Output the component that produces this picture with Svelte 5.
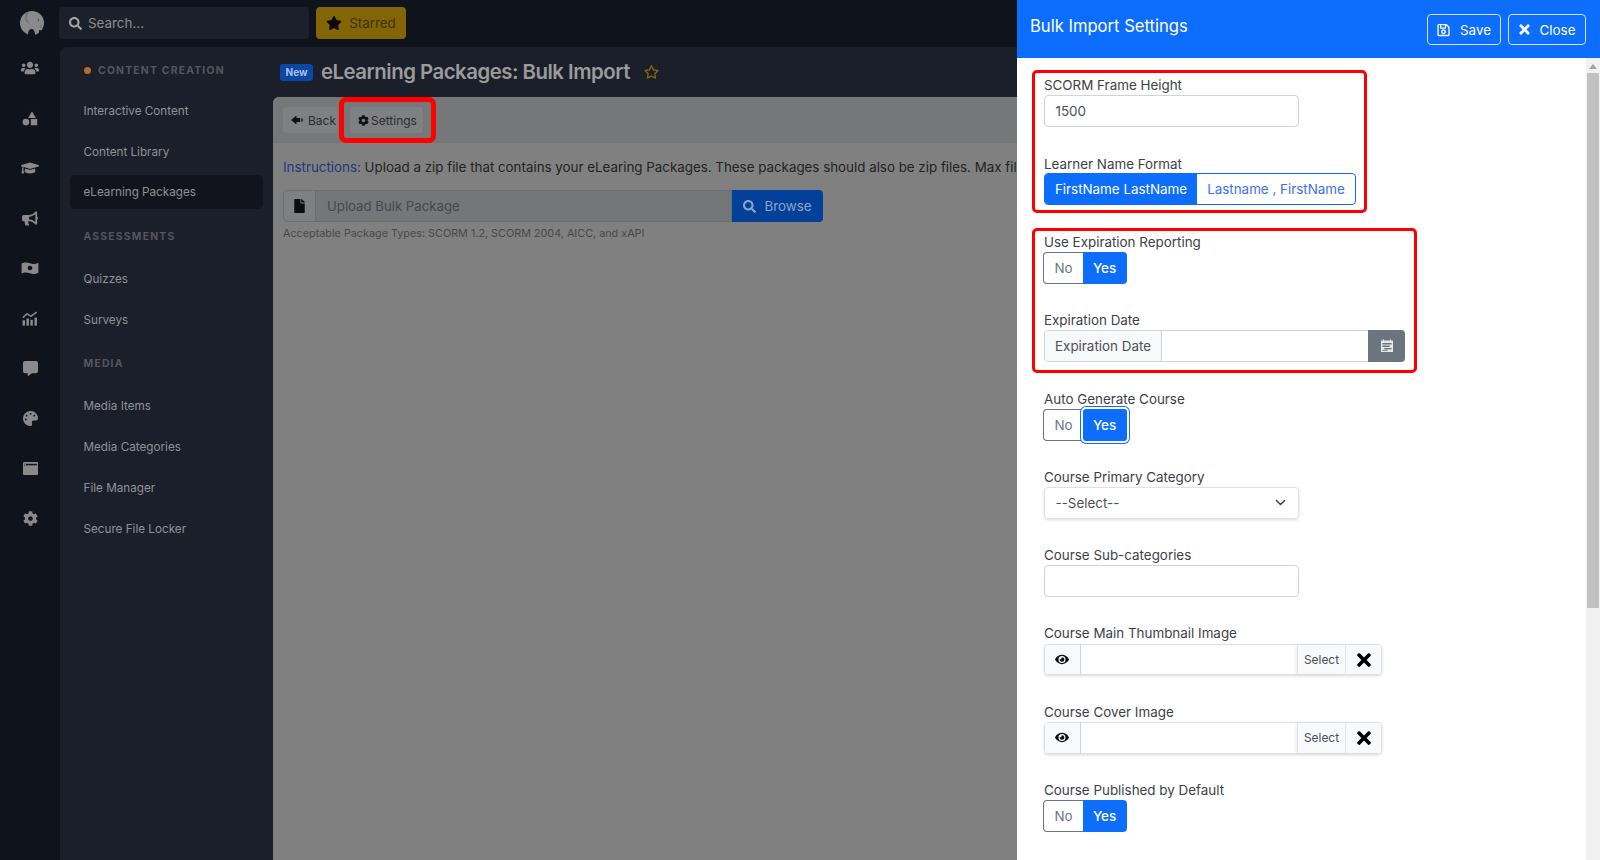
<script>
  const railIcons = ['users','shapes','cap','bullhorn','money','chart','comment','palette','window','cog'];
  const groups = [
    { title: 'CONTENT CREATION', dot: true, items: ['Interactive Content','Content Library','eLearning Packages'] },
    { title: 'ASSESSMENTS', items: ['Quizzes','Surveys'] },
    { title: 'MEDIA', items: ['Media Items','Media Categories','File Manager','Secure File Locker'] }
  ];
  const P = {
    star: 'M259.3 17.8L194 150.2 47.9 171.5c-26.2 3.8-36.7 36.1-17.7 54.6l105.7 103-25 145.5c-4.5 26.3 23.2 46 46.4 33.7L288 439.6l130.7 68.7c23.2 12.2 50.9-7.4 46.4-33.7l-25-145.5 105.7-103c19-18.5 8.5-50.8-17.7-54.6L382 150.2 316.7 17.8c-11.7-23.6-45.6-23.9-57.4 0z',
    starO: 'M528.1 171.5L382 150.2 316.7 17.8c-11.7-23.6-45.6-23.9-57.4 0L194 150.2 47.9 171.5c-26.2 3.8-36.7 36.1-17.7 54.6l105.7 103-25 145.5c-4.5 26.3 23.2 46 46.4 33.7L288 439.6l130.7 68.7c23.2 12.2 50.9-7.4 46.4-33.7l-25-145.5 105.7-103c19-18.5 8.5-50.8-17.7-54.6zM388.6 312.3l23.7 138.4L288 385.4l-124.3 65.3 23.7-138.4-100.6-98 139-20.2 62.2-126 62.2 126 139 20.2-100.6 98z',
    search: 'M505 442.7L405.3 343c-4.5-4.5-10.6-7-17-7H372c27.6-35.3 44-79.7 44-128C416 93.1 322.9 0 208 0S0 93.1 0 208s93.1 208 208 208c48.3 0 92.7-16.4 128-44v16.3c0 6.4 2.5 12.5 7 17l99.7 99.7c9.4 9.4 24.6 9.4 33.9 0l28.3-28.3c9.4-9.4 9.4-24.6.1-34zM208 336c-70.7 0-128-57.2-128-128 0-70.7 57.2-128 128-128 70.7 0 128 57.2 128 128 0 70.7-57.2 128-128 128z',
    cog: 'M487.4 315.7l-42.6-24.6c4.3-23.2 4.3-47 0-70.2l42.6-24.6c4.9-2.8 7.1-8.6 5.5-14-11.1-35.6-30-67.8-54.7-94.6-3.8-4.1-10-5.1-14.8-2.3L380.8 110c-17.9-15.4-38.5-27.3-60.8-35.1V25.8c0-5.6-3.9-10.5-9.4-11.7-36.7-8.2-74.3-7.8-109.2 0-5.5 1.2-9.4 6.1-9.4 11.7V75c-22.2 7.9-42.8 19.8-60.8 35.1L88.7 85.5c-4.9-2.8-11-1.9-14.8 2.3-24.7 26.7-43.6 58.9-54.7 94.6-1.7 5.4.6 11.2 5.5 14L67.3 221c-4.3 23.2-4.3 47 0 70.2l-42.6 24.6c-4.9 2.8-7.1 8.6-5.5 14 11.1 35.6 30 67.8 54.7 94.6 3.8 4.1 10 5.1 14.8 2.3l42.6-24.6c17.9 15.4 38.5 27.3 60.8 35.1v49.2c0 5.6 3.9 10.5 9.4 11.7 36.7 8.2 74.3 7.8 109.2 0 5.5-1.2 9.4-6.1 9.4-11.7v-49.2c22.2-7.9 42.8-19.8 60.8-35.1l42.6 24.6c4.9 2.8 11 1.9 14.8-2.3 24.7-26.7 43.6-58.9 54.7-94.6 1.5-5.5-.7-11.3-5.6-14.1zM256 336c-44.1 0-80-35.9-80-80s35.9-80 80-80 80 35.9 80 80-35.9 80-80 80z',
    file: 'M224 136V0H24C10.7 0 0 10.7 0 24v464c0 13.3 10.7 24 24 24h336c13.3 0 24-10.7 24-24V160H248c-13.2 0-24-10.8-24-24zm160-14.1v6.1H256V0h6.1c6.4 0 12.5 2.5 17 7l97.9 98c4.5 4.5 7 10.6 7 16.9z',
    times: 'M242.72 256l100.07-100.07c12.28-12.28 12.28-32.19 0-44.48l-22.24-22.24c-12.28-12.28-32.19-12.28-44.48 0L176 189.28 75.93 89.21c-12.28-12.28-32.19-12.28-44.48 0L9.21 111.45c-12.28 12.28-12.28 32.19 0 44.48L109.28 256 9.21 356.07c-12.28 12.28-12.28 32.19 0 44.48l22.24 22.24c12.28 12.28 32.2 12.28 44.48 0L176 322.72l100.07 100.07c12.28 12.28 32.2 12.28 44.48 0l22.24-22.24c12.28-12.28 12.28-32.19 0-44.48L242.72 256z',
    eye: 'M572.52 241.4C518.29 135.59 410.93 64 288 64S57.68 135.64 3.48 241.41a32.35 32.35 0 0 0 0 29.19C57.71 376.41 165.07 448 288 448s230.32-71.64 284.52-177.41a32.35 32.35 0 0 0 0-29.19zM288 400a144 144 0 1 1 144-144 143.93 143.93 0 0 1-144 144zm0-240a95.31 95.31 0 0 0-25.31 3.79 47.85 47.85 0 0 1-66.9 66.9A95.78 95.78 0 1 0 288 160z',
    save: 'M433.941 129.941l-83.882-83.882A48 48 0 0 0 316.118 32H48C21.49 32 0 53.49 0 80v352c0 26.51 21.49 48 48 48h352c26.51 0 48-21.49 48-48V163.882a48 48 0 0 0-14.059-33.941zM272 80v80H144V80h128zm122 352H54a6 6 0 0 1-6-6V86a6 6 0 0 1 6-6h42v104c0 13.255 10.745 24 24 24h176c13.255 0 24-10.745 24-24V83.882l78.243 78.243a6 6 0 0 1 1.757 4.243V426a6 6 0 0 1-6 6zM224 232c-48.523 0-88 39.477-88 88s39.477 88 88 88 88-39.477 88-88-39.477-88-88-88zm0 128c-22.056 0-40-17.944-40-40s17.944-40 40-40 40 17.944 40 40-17.944 40-40 40z',
    users: 'M96 224c35.3 0 64-28.7 64-64s-28.7-64-64-64-64 28.7-64 64 28.7 64 64 64zm448 0c35.3 0 64-28.7 64-64s-28.7-64-64-64-64 28.7-64 64 28.7 64 64 64zm32 32h-64c-17.6 0-33.5 7.1-45.1 18.6 40.3 22.1 68.9 62 75.1 109.4h66c17.7 0 32-14.3 32-32v-32c0-35.3-28.7-64-64-64zm-256 0c61.9 0 112-50.1 112-112S381.9 32 320 32 208 82.1 208 144s50.1 112 112 112zm76.8 32h-8.3c-20.8 10-43.9 16-68.5 16s-47.6-6-68.5-16h-8.3C179.6 288 128 339.6 128 403.2V432c0 26.5 21.5 48 48 48h288c26.5 0 48-21.5 48-48v-28.8c0-63.6-51.6-115.2-115.2-115.2zm-223.7-13.4C161.5 263.1 145.6 256 128 256H64c-35.3 0-64 28.7-64 64v32c0 17.7 14.3 32 32 32h65.9c6.3-47.4 34.9-87.3 75.2-109.4z',
    cap: 'M622.34 153.2L343.4 67.5c-15.2-4.67-31.6-4.67-46.79 0L17.66 153.2c-23.54 7.23-23.54 38.36 0 45.59l48.63 14.94c-10.67 13.19-17.23 29.28-17.88 46.9C38.78 266.15 32 276.11 32 288c0 10.78 5.68 19.85 13.86 25.65L20.33 428.53C18.11 438.52 25.71 448 35.94 448h56.11c10.24 0 17.84-9.48 15.62-19.47L82.14 313.65C90.32 307.85 96 298.78 96 288c0-11.57-6.47-21.25-15.66-26.87.76-15.02 8.44-28.3 20.69-36.72L296.6 284.5c9.06 2.78 26.44 6.25 46.79 0l278.95-85.7c23.55-7.24 23.55-38.36 0-45.6zM352.79 315.09c-28.53 8.76-52.84 3.92-65.59 0l-145.02-44.55L128 384c0 35.35 85.96 64 192 64s192-28.65 192-64l-14.18-113.47-145.03 44.56z',
    bullhorn: 'M576 240c0-23.63-12.95-44.04-32-55.12V32.01C544 23.26 537.02 0 512 0c-7.12 0-14.19 2.38-19.98 7.02l-85.03 68.03C364.28 109.19 310.66 128 256 128H64c-35.35 0-64 28.65-64 64v96c0 35.35 28.65 64 64 64h33.7c-1.39 10.48-2.18 21.14-2.18 32 0 39.77 9.26 77.35 25.56 110.94 5.19 10.69 16.52 17.06 28.4 17.06h74.28c26.05 0 41.69-29.84 25.9-50.56-16.4-21.52-26.15-48.36-26.15-77.44 0-11.11 1.62-21.79 4.41-32H256c54.66 0 108.28 18.81 150.98 52.95l85.03 68.03a32.023 32.023 0 0 0 19.98 7.02c24.92 0 32-22.78 32-32V295.13C563.05 284.04 576 263.63 576 240zm-96 141.42l-33.05-26.44C392.95 311.78 325.12 288 256 288v-96c69.12 0 136.95-23.78 190.95-66.98L480 98.58v282.84z',
    comment: 'M448 0H64C28.7 0 0 28.7 0 64v288c0 35.3 28.7 64 64 64h96v84c0 9.8 11.2 15.5 19.1 9.7L304 416h144c35.3 0 64-28.7 64-64V64c0-35.3-28.7-64-64-64z',
    palette: 'M204.3 5C104.9 24.4 24.8 104.3 5.2 203.4c-37 187 131.7 326.4 258.8 306.7 41.2-6.4 61.4-54.6 42.5-91.7-23.1-45.4 9.9-98.4 60.9-98.4h79.7c35.8 0 64.8-29.6 64.9-65.3C511.5 97.1 368.1-26.9 204.3 5zM96 320c-17.7 0-32-14.3-32-32s14.3-32 32-32 32 14.3 32 32-14.3 32-32 32zm32-128c-17.7 0-32-14.3-32-32s14.3-32 32-32 32 14.3 32 32-14.3 32-32 32zm128-64c-17.7 0-32-14.3-32-32s14.3-32 32-32 32 14.3 32 32-14.3 32-32 32zm128 64c-17.7 0-32-14.3-32-32s14.3-32 32-32 32 14.3 32 32-14.3 32-32 32z'
  };
</script>

{#snippet fa(name, vb, cls)}
  <svg class={cls} viewBox={vb} aria-hidden="true"><path d={P[name]} fill="currentColor" fill-rule="evenodd"/></svg>
{/snippet}

{#snippet railIcon(name)}
  {#if name === 'users'}{@render fa('users','0 0 640 512','ri')}
  {:else if name === 'cap'}{@render fa('cap','0 0 640 512','ri')}
  {:else if name === 'bullhorn'}{@render fa('bullhorn','0 0 576 512','ri mid')}
  {:else if name === 'comment'}{@render fa('comment','0 0 512 512','ri small')}
  {:else if name === 'palette'}{@render fa('palette','0 0 512 512','ri small')}
  {:else if name === 'cog'}{@render fa('cog','0 0 512 512','ri small')}
  {:else if name === 'shapes'}
    <svg class="ri mid" viewBox="0 0 16 14" aria-hidden="true" fill="currentColor"><path d="M10 0 14 6.400H6Z"/><circle cx="3.900" cy="10.600" r="3.300"/><rect x="8.800" y="7.400" width="6.400" height="6.400" rx=".5"/></svg>
  {:else if name === 'money'}
    <svg class="ri" viewBox="0 0 18 14" aria-hidden="true"><path fill="currentColor" d="M.6 2.600C4 1 6 1.400 9 2.300c3 .9 5.400.9 8.400-.6v10c-3 1.600-5.400 1.500-8.400.6-3-.9-5-1.300-8.400.3Z"/><circle cx="9" cy="7" r="2.300" fill="#10141c"/></svg>
  {:else if name === 'chart'}
    <svg class="ri mid" viewBox="0 0 18 16" aria-hidden="true" fill="currentColor"><rect x=".6" y="10" width="2.800" height="6"/><rect x="5" y="8" width="2.800" height="8"/><rect x="9.400" y="9.500" width="2.800" height="6.500"/><rect x="14" y="7" width="2.800" height="9"/><path d="M1 7 5.700 2.600 10 5.600 16.500.9" fill="none" stroke="currentColor" stroke-width="1.700"/></svg>
  {:else if name === 'window'}
    <svg class="ri small" viewBox="0 0 16 14" aria-hidden="true"><rect x="0" y="0" width="16" height="14" rx="1.200" fill="currentColor"/><rect x="1" y="2" width="14" height="1.600" fill="#10141c"/><rect x="1.600" y="2.200" width="1.400" height="1.200" fill="#999"/></svg>
  {/if}
{/snippet}

{#snippet toggle(focus)}
  <div class="toggle">
    <span class="t-no">No</span>
    <span class="t-yes" class:focus>Yes</span>
  </div>
{/snippet}

{#snippet picker()}
  <div class="ig media">
    <span class="cell eye-cell">{@render fa('eye','0 0 576 512','eye')}</span>
    <span class="grow"></span>
    <span class="cell sel">Select</span>
    <span class="cell x-cell">{@render fa('times','0 0 352 512','x')}</span>
  </div>
{/snippet}

<div class="app">
  <nav class="rail">
    <svg class="logo" viewBox="0 0 24 24" aria-hidden="true">
      <circle cx="12" cy="12" r="12" fill="#8a8a8a"/>
      <path d="M8 1.500C5 5 5.500 9.500 9 12.500" fill="none" stroke="#5e5e5e" stroke-width="1"/>
      <path d="M8 24c0-3.500 1.500-6 3.500-6 2.200 0 3.500 2.500 3.500 6ZM17.500 24c1-1.500 2-2.500 1.500-5 2 .5 3 .5 5-1v6Z" fill="#10141c"/>
      <path d="M20 14c.5 2 1.500 3 3 3" fill="none" stroke="#5e5e5e" stroke-width=".8"/>
      <circle cx="18.500" cy="9" r=".8" fill="#333"/>
    </svg>
    <div class="rail-icons">
      {#each railIcons as r}
        <span class="rail-item">{@render railIcon(r)}</span>
      {/each}
    </div>
  </nav>

  <div class="main">
    <header class="top">
      <div class="search">{@render fa('search','0 0 512 512','s-ico')}<span>Search...</span></div>
      <div class="starred">{@render fa('star','0 0 576 512','st-ico')}<span>Starred</span></div>
    </header>

    <div class="shell">
      <aside class="side">
        {#each groups as g}
          <div class="s-title" class:first={g.dot}>
            {#if g.dot}<i class="dot"></i>{/if}{g.title}
          </div>
          {#each g.items as it}
            <div class="s-item" class:active={it === 'eLearning Packages'}>{it}</div>
          {/each}
        {/each}
      </aside>

      <main class="content">
        <div class="title-row">
          <span class="badge">New</span>
          <h1>eLearning Packages: Bulk Import</h1>
          {@render fa('starO','0 0 576 512','fav')}
        </div>
        <section class="card">
          <div class="card-head">
            <span class="btn back">
              <svg class="b-ico" viewBox="0 0 12 12" aria-hidden="true"><path fill="currentColor" d="M0 6 5.500 1.500V4H9V8H5.500V10.500ZM9.800 4.200h.9v3.600h-.9ZM11.200 4.600h.7v2.800h-.7Z"/></svg>
              Back</span>
            <span class="btn settings">{@render fa('cog','0 0 512 512','c-ico')} Settings</span>
          </div>
          <div class="card-body">
            <p class="inst"><span class="lnk">Instructions:</span> Upload a zip file that contains your eLearing Packages. These packages should also be zip files. Max file size is 2GB per upload.</p>
            <div class="upload">
              <span class="u-pre">{@render fa('file','0 0 384 512','f-ico')}</span>
              <span class="u-in">Upload Bulk Package</span>
              <span class="u-btn">{@render fa('search','0 0 512 512','ub-ico')}Browse</span>
            </div>
            <small>Acceptable Package Types: SCORM 1.2, SCORM 2004, AICC, and xAPI</small>
          </div>
        </section>
      </main>
    </div>
  </div>

  <aside class="panel">
    <header class="p-head">
      <h2>Bulk Import Settings</h2>
      <div class="p-actions">
        <span class="p-btn">{@render fa('save','0 0 448 512','pb-ico')}Save</span>
        <span class="p-btn close">{@render fa('times','0 0 352 512','pb-ico x2')}Close</span>
      </div>
    </header>
    <div class="p-body">
      <form class="form">
        <div class="f"><label>SCORM Frame Height</label><div class="ctl w255">1500</div></div>
        <div class="f"><label>Learner Name Format</label>
          <div class="seg"><span class="on">FirstName LastName</span><span class="off">Lastname , FirstName</span></div>
        </div>
        <div class="f"><label>Use Expiration Reporting</label>{@render toggle(false)}</div>
        <div class="f"><label>Expiration Date</label>
          <div class="ig date">
            <span class="cell d-pre">Expiration Date</span>
            <span class="grow"></span>
            <span class="d-btn">
              <svg viewBox="0 0 14 14" width="14" height="14" aria-hidden="true"><path fill="#e6e8ea" fill-rule="evenodd" d="M1 1.500h2V.6h1v.9h6V.6h1v.9h2V13H1ZM2.300 4v1.400h9.400V4ZM2.300 6.600v1.300h7.400V6.600ZM4.300 9v1.300h7.400V9ZM2.300 10.800v1h5.400v-1Z"/></svg>
            </span>
          </div>
        </div>
        <div class="f"><label>Auto Generate Course</label>{@render toggle(true)}</div>
        <div class="f"><label>Course Primary Category</label>
          <div class="ctl w255 select">--Select--
            <svg viewBox="0 0 16 16" width="11" height="11" aria-hidden="true"><path d="m2 5 6 6 6-6" fill="none" stroke="#343a40" stroke-width="2" stroke-linecap="round" stroke-linejoin="round"/></svg>
          </div>
        </div>
        <div class="f"><label>Course Sub-categories</label><div class="ctl w255"></div></div>
        <div class="f"><label>Course Main Thumbnail Image</label>{@render picker()}</div>
        <div class="f"><label>Course Cover Image</label>{@render picker()}</div>
        <div class="f"><label>Course Published by Default</label>{@render toggle(false)}</div>
      </form>
      <div class="scroll">
        <svg class="up" viewBox="0 0 8 5" width="8" height="5" aria-hidden="true"><path d="M4 0 8 5H0Z" fill="#a3a3a3"/></svg>
        <div class="thumb"></div>
      </div>
    </div>
  </aside>

  <div class="mark m1"></div>
  <div class="mark m2"></div>
  <div class="mark m3"></div>
</div>

<style>
  :global(body) { margin: 0; font-family: Inter, "Liberation Sans", sans-serif; }
  .app { position: relative; display: grid; grid-template-columns: 60px 1fr; width: 1600px; height: 860px; overflow: hidden; background: #0f131b; }
  .rail { display: flex; flex-direction: column; align-items: center; color: #8a8a8a; padding-top: 11px; }
  .logo { width: 24px; height: 24px; margin-left: 4px; }
  .rail-icons { display: flex; flex-direction: column; margin-top: 8px; }
  .rail-item { height: 50px; display: flex; align-items: center; justify-content: center; }
  .ri { width: 18px; height: 18px; }
  .ri.mid { width: 16px; height: 15px; }
  .ri.small { width: 15px; height: 15px; }
  .main { display: flex; flex-direction: column; min-width: 0; }
  .top { height: 47px; display: flex; align-items: center; gap: 7px; box-sizing: border-box; padding-bottom: 1px; }
  .search { width: 250px; height: 32px; margin-left: -1px; box-sizing: border-box; padding-left: 10px; background: #1b202b; border-radius: 4px; display: flex; align-items: center; gap: 6px; color: #8e8e8e; font-size: 13.400px; }
  .s-ico { width: 13px; height: 13px; color: #a5a5a5; }
  .starred { width: 90px; height: 32px; box-sizing: border-box; background: #846505; border-radius: 4px; display: flex; align-items: center; justify-content: center; gap: 7px; color: #3f3209; font-size: 13.400px; }
  .st-ico { width: 16px; height: 14px; color: #0c0a03; }
  .shell { flex: 1; display: flex; min-height: 0; }
  .side { width: 213px; background: #1b1f2a; border-top-left-radius: 7px; box-sizing: border-box; padding: 0 10px; color: #8f9197; font-size: 11.700px; display: flex; flex-direction: column; }
  .s-title { height: 24px; margin-top: 11.500px; display: flex; align-items: center; padding-left: 13.500px; color: #53565e; font-size: 10.400px; font-weight: 700; letter-spacing: 1.200px; }
  .s-title.first { margin-top: 11px; padding-left: 13px; }
  .s-title + .s-item { margin-top: 9.500px; }
  .s-title.first + .s-item { margin-top: 8px; }
  .dot { width: 7px; height: 7px; border-radius: 50%; background: #b16a31; margin-right: 7px; margin-left: 1px; }
  .s-item { height: 41px; flex: none; display: flex; align-items: center; padding-left: 13.500px; border-radius: 5px; box-sizing: border-box; }
  .s-item.active { height: 34px; margin: 3px 0 4px; background: #11141c; }
  .content { flex: 1; min-width: 0; background: #1b1f2a; display: flex; flex-direction: column; }
  .title-row { height: 50px; display: flex; align-items: center; padding-left: 7px; }
  .badge { width: 33px; height: 17px; background: #0b47a3; color: #a9c1e2; border-radius: 3px; font-size: 10px; font-weight: 700; display: flex; align-items: center; justify-content: center; }
  h1 { margin: -1px 0 0 8px; font-size: 20.400px; font-weight: 600; color: #9b9b9b; letter-spacing: -.5px; }
  .fav { width: 15px; height: 14px; margin-left: 14px; color: #86690b; }
  .card { flex: 1; background: #808080; border-radius: 6px 0 0 0; color: #2a2a2a; overflow: hidden; }
  .card-head { height: 46px; background: #757778; padding: 10px 10px 0; box-sizing: border-box; display: flex; gap: 12px; }
  .btn { height: 26px; background: #7f8081; border-radius: 4px; display: flex; align-items: center; font-size: 12px; color: #2c2c2c; box-sizing: border-box; }
  .back { width: 55px; padding-left: 8px; gap: 5px; }
  .settings { width: 73px; padding-left: 8px; gap: 2px; }
  .b-ico { width: 12px; height: 12px; color: #111; }
  .c-ico { width: 11px; height: 11px; color: #111; }
  .card-body { padding: 15px 10px; }
  .inst { margin: 0; font-size: 13.350px; line-height: 18px; white-space: nowrap; color: #232323; }
  .lnk { color: #21377f; }
  .upload { width: 540px; height: 32px; margin-top: 14px; display: flex; }
  .u-pre { width: 33px; background: #7f8081; border: 1px solid #6b6e71; border-radius: 4px 0 0 4px; box-sizing: border-box; display: flex; align-items: center; justify-content: center; }
  .f-ico { width: 11px; height: 14px; color: #0d0d0d; }
  .u-in { flex: 1; background: #74777a; border: 1px solid #6b6e71; border-left: 0; box-sizing: border-box; display: flex; align-items: center; padding-left: 11px; font-size: 13.200px; color: #44484c; }
  .u-btn { width: 91px; background: #03409a; border-radius: 0 4px 4px 0; display: flex; align-items: center; justify-content: center; gap: 8px; color: #8ea3c9; font-size: 13.400px; }
  .ub-ico { width: 13px; height: 13px; color: #8ea3c9; }
  small { display: block; margin-top: 5px; font-size: 10.800px; color: #494949; line-height: 13px; }

  .panel { position: absolute; top: 0; right: 0; bottom: 0; width: 583px; background: #fff; display: flex; flex-direction: column; }
  .p-head { height: 58px; flex: none; background: #0d6efd; display: flex; justify-content: space-between; padding: 14px 14px 0 13px; box-sizing: border-box; color: #fff; }
  h2 { margin: 2px 0 0; font-size: 16.600px; font-weight: 400; }
  .p-actions { display: flex; gap: 7px; }
  .p-btn { width: 74px; height: 31px; box-sizing: border-box; border: 1px solid #cfe2ff; border-radius: 4px; display: flex; align-items: center; justify-content: center; gap: 10px; font-size: 13.400px; }
  .p-btn.close { width: 78px; }
  .pb-ico { width: 13px; height: 14px; }
  .x2 { width: 11px; height: 15px; }
  .p-body { flex: 1; display: flex; min-height: 0; }
  .form { flex: 1; padding: 17.200px 0 0 27px; }
  .f { height: 78.330px; }
  label { display: block; height: 20.300px; line-height: 20px; font-size: 13.400px; color: #3d4146; }
  .ctl { height: 31.500px; box-sizing: border-box; border: 1px solid #ced4da; border-radius: 4px; padding-left: 10.500px; display: flex; align-items: center; font-size: 13.400px; color: #4b5056; }
  .w255 { width: 255px; }
  .select { justify-content: space-between; padding-right: 12px; border-color: #dee2e6; box-shadow: 0 1px 3px rgba(0,0,0,.14); }
  .seg { display: flex; width: 312px; height: 32px; margin-top: -1px; box-sizing: border-box; border: 1px solid #0d6efd; border-radius: 4px; font-size: 13.400px; overflow: hidden; }
  .on { width: 152px; background: #0d6efd; color: #fff; display: flex; align-items: center; justify-content: center; }
  .off { flex: 1; color: #3b6ff0; display: flex; align-items: center; justify-content: center; }
  .toggle { display: flex; width: 84px; height: 32px; margin-left: -1px; font-size: 13.400px; }
  .t-no { width: 40px; box-sizing: border-box; border: 1px solid #6c757d; border-right: 0; border-radius: 4px 0 0 4px; color: #6c757d; display: flex; align-items: center; justify-content: center; }
  .t-yes { position: relative; flex: 1; padding-right: 1px; background: #0d6efd; color: #fff; border-radius: 0 4px 4px 0; display: flex; align-items: center; justify-content: center; font-weight: 500; }
  .t-yes.focus { border-radius: 3px; box-shadow: 0 0 0 2px #fff, 0 0 0 3px #0d6efd; }
  .ig { display: flex; height: 31.500px; box-sizing: border-box; border: 1px solid #ced4da; border-radius: 4px; font-size: 13.400px; color: #4b5056; }
  .grow { flex: 1; }
  .cell { background: #f8f9fa; display: flex; align-items: center; justify-content: center; box-sizing: border-box; }
  .date { width: 361px; }
  .d-pre { width: 117px; border-right: 1px solid #ced4da; border-radius: 3px 0 0 3px; }
  .d-btn { width: 37px; margin: -1px; background: #6c757d; border-radius: 0 4px 4px 0; display: flex; align-items: center; justify-content: center; }
  .media { width: 338px; box-shadow: 0 1px 3px rgba(0,0,0,.16); border-color: #dde1e5; }
  .eye-cell { width: 36px; padding-right: 2px; border-right: 1px solid #ced4da; border-radius: 3px 0 0 3px; }
  .eye { width: 14px; height: 13px; color: #111; }
  .sel { width: 48px; font-size: 11.900px; border-left: 1px solid #e2e5e8; box-shadow: -2px 0 3px rgba(0,0,0,.06); }
  .x-cell { width: 36px; border-left: 1px solid #e2e5e8; border-radius: 0 3px 3px 0; }
  .x { width: 14px; height: 20px; color: #000; }
  .scroll { width: 14px; flex: none; background: #f1f1f1; display: flex; flex-direction: column; align-items: center; }
  .up { margin-top: 6px; }
  .thumb { width: 12px; height: 535px; background: #c1c1c1; margin-top: 4px; }

  .mark { position: absolute; box-sizing: border-box; border-style: solid; border-color: #f00; }
  .m1 { left: 339px; top: 97px; width: 97px; height: 46px; border-width: 5px; border-radius: 7px; }
  .m2 { left: 1032px; top: 70px; width: 335px; height: 143px; border-width: 3px; border-radius: 5px; }
  .m3 { left: 1032px; top: 228px; width: 385px; height: 145px; border-width: 3px; border-radius: 5px; }
</style>
